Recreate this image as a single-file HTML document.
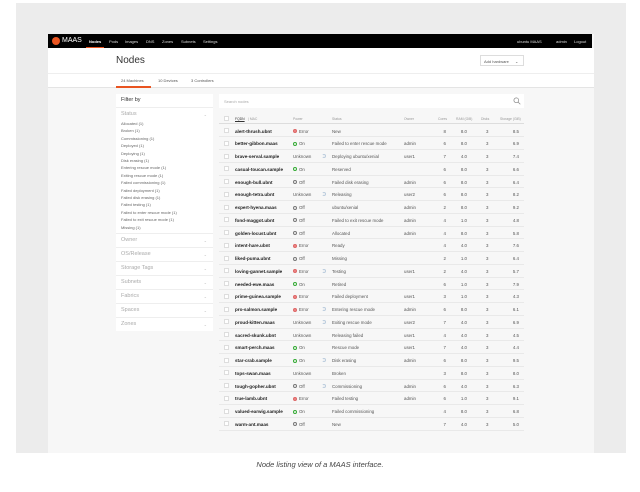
<!DOCTYPE html><html><head><meta charset="utf-8"><style>
*{margin:0;padding:0;box-sizing:border-box}
body{width:640px;height:492px;background:#fff;font-family:"Liberation Sans",sans-serif;position:relative;overflow:hidden;color:#333}
.a{position:absolute}
#panel{left:16px;top:3px;width:610px;height:450px;background:#ececec}
#frame{left:48px;top:34px;width:546px;height:419px;background:#f7f7f7}
#nav{left:48px;top:34px;width:544px;height:14px;background:#000;color:#ddd;font-size:4px}
#nav span{position:absolute;top:5px}
#hdr{left:48px;top:48px;width:546px;height:40px;background:#fff;border-bottom:1px solid #e4e4e4}
.t{font-size:4px;color:#555;white-space:nowrap}
#side{left:116px;top:94px;width:97px;height:237px;background:#fff}
#side .h{position:absolute;left:5px;font-size:5.5px;color:#aaa}
#side .i{position:absolute;left:5px;font-size:4px;color:#666;white-space:nowrap}
#side .ln{position:absolute;left:0;width:97px;height:1px;background:#eee}
#side .ch{position:absolute;right:6px;font-size:4px;color:#bbb}
.row{position:absolute;left:219px;width:305px;height:12.75px;border-bottom:1px solid #e9e9e9;font-size:4.4px;color:#555;white-space:nowrap}
.row span{position:absolute;top:4px}
.row .n{left:16px;font-weight:bold;color:#222;font-size:4.6px}
.row .cb{left:5px;top:3.5px;width:5px;height:5px;border:1px solid #ddd;background:#fff}
.r{text-align:right}
.dot{display:inline-block;width:4px;height:4px;border-radius:50%;vertical-align:-0.5px;margin-right:2px}
.err{background:#e88;border:1px solid #d66}
.on{border:1px solid #3a3}
.off{border:1px solid #777}
.spin{display:inline-block;width:4px;height:4px;border-radius:50%;border:1px solid #bcd;border-left-color:transparent}
</style></head><body>
<div class="a" id="panel"></div>
<div class="a" id="frame"></div>
<div class="a" id="nav">
<div class="a" style="left:4px;top:3px;width:8px;height:8px;border-radius:50%;background:#e95420"></div>
<span style="left:14px;top:3px;font-size:7px;color:#fff">MAAS</span>
<div class="a" style="left:38px;top:0;width:18px;height:14px;border-bottom:1px solid #e95420"></div>
<span style="left:41px;color:#fff;font-weight:bold">Nodes</span>
<span style="left:61px">Pods</span><span style="left:77px">Images</span><span style="left:98px">DNS</span><span style="left:114px">Zones</span><span style="left:133px">Subnets</span><span style="left:155px">Settings</span>
<span style="left:469px">ubuntu MAAS</span><span style="left:508px">admin</span><span style="left:526px">Logout</span>
</div>
<div class="a" id="hdr">
<div class="a" style="left:68px;top:7px;font-size:10px;color:#333">Nodes</div>
<div class="a" style="left:0;top:25px;width:546px;height:1px;background:#eee"></div>
<div class="a t" style="left:432px;top:7px;width:44px;height:11px;border:1px solid #ddd;padding:3px 0 0 3px">Add hardware <span style="margin-left:5px">⌄</span></div>
<div class="a t" style="left:73px;top:30px">24 Machines</div>
<div class="a t" style="left:110px;top:30px">10 Devices</div>
<div class="a t" style="left:143px;top:30px">3 Controllers</div>
<div class="a" style="left:68px;top:38px;width:35px;height:1.5px;background:#e95420"></div>
</div>
<div class="a" id="side">
<div class="h" style="top:3px;color:#333;font-size:5.5px">Filter by</div>
<div class="ln" style="top:13px"></div>
<div class="h" style="top:17px">Status</div><div class="ch" style="top:18px">⌄</div>
<div class="i" style="top:27px">Allocated (1)</div><div class="i" style="top:34.4px">Broken (1)</div><div class="i" style="top:41.8px">Commissioning (1)</div><div class="i" style="top:49.2px">Deployed (1)</div><div class="i" style="top:56.6px">Deploying (1)</div><div class="i" style="top:64px">Disk erasing (1)</div><div class="i" style="top:71.4px">Entering rescue mode (1)</div><div class="i" style="top:78.8px">Exiting rescue mode (1)</div><div class="i" style="top:86.2px">Failed commissioning (1)</div><div class="i" style="top:93.6px">Failed deployment (1)</div><div class="i" style="top:101px">Failed disk erasing (1)</div><div class="i" style="top:108.4px">Failed testing (1)</div><div class="i" style="top:115.8px">Failed to enter rescue mode (1)</div><div class="i" style="top:123.2px">Failed to exit rescue mode (1)</div><div class="i" style="top:130.6px">Missing (1)</div>
<div class="ln" style="top:139px"></div><div class="h" style="top:143px">Owner</div><div class="ch" style="top:144px">⌄</div>
<div class="ln" style="top:153px"></div><div class="h" style="top:157px">OS/Release</div><div class="ch" style="top:158px">⌄</div>
<div class="ln" style="top:167px"></div><div class="h" style="top:171px">Storage Tags</div><div class="ch" style="top:172px">⌄</div>
<div class="ln" style="top:181px"></div><div class="h" style="top:185px">Subnets</div><div class="ch" style="top:186px">⌄</div>
<div class="ln" style="top:195px"></div><div class="h" style="top:199px">Fabrics</div><div class="ch" style="top:200px">⌄</div>
<div class="ln" style="top:209px"></div><div class="h" style="top:213px">Spaces</div><div class="ch" style="top:214px">⌄</div>
<div class="ln" style="top:223px"></div><div class="h" style="top:227px">Zones</div><div class="ch" style="top:228px">⌄</div>
</div>
<div class="a" style="left:219px;top:94px;width:305px;height:14px;background:#fff"><span class="a t" style="left:5px;top:5px;color:#aaa">Search nodes</span>
<svg class="a" style="left:294px;top:3px" width="8" height="8" viewBox="0 0 8 8"><circle cx="3.3" cy="3.3" r="2.4" fill="none" stroke="#888" stroke-width=".7"/><path d="M5 5l2.3 2.3" stroke="#888" stroke-width=".7"/></svg></div>
<div class="row" style="top:113px;height:11px;font-size:3.4px;color:#999;border-bottom:1px solid #ddd"><span class="cb" style="top:3px"></span><span style="left:16px;top:4px;color:#333;text-decoration:underline">FQDN</span><span style="left:29px;top:4px">| MAC</span><span style="left:74px;top:4px">Power</span><span style="left:113px;top:4px">Status</span><span style="left:185px;top:4px">Owner</span><span style="left:219px;top:4px">Cores</span><span style="left:237px;top:4px">RAM (GiB)</span><span style="left:262px;top:4px">Disks</span><span style="left:281px;top:4px">Storage (GiB)</span></div>
<div id="rows"></div>
<div class="a" style="left:0;top:460px;width:640px;text-align:center;font-size:7.5px;font-style:italic;color:#444">Node listing view of a MAAS interface.</div>
<script>
var d=[["alert-thrush.ubnt","E","New","",8,"8.0","8.5"],["better-gibbon.maas","O","Failed to enter rescue mode","admin",6,"8.0","6.9"],["brave-serval.sample","U","*Deploying ubuntu/xenial","user1",7,"4.0","7.4"],["casual-toucan.sample","O","Reserved","",6,"8.0","6.6"],["enough-bull.ubnt","F","Failed disk erasing","admin",6,"8.0","6.4"],["enough-tetra.ubnt","U","*Releasing","user2",6,"8.0","8.2"],["expert-hyena.maas","F","ubuntu/xenial","admin",2,"8.0","9.2"],["fond-maggot.ubnt","F","Failed to exit rescue mode","admin",4,"1.0","4.8"],["golden-locust.ubnt","F","Allocated","admin",4,"8.0","5.8"],["intent-hare.ubnt","E","Ready","",4,"4.0","7.6"],["liked-puma.ubnt","F","Missing","",2,"1.0","6.4"],["loving-gannet.sample","E","*Testing","user1",2,"4.0","5.7"],["needed-ewe.maas","O","Retired","",6,"1.0","7.9"],["prime-guinea.sample","E","Failed deployment","user1",3,"1.0","4.3"],["pro-salmon.sample","E","*Entering rescue mode","admin",6,"8.0","6.1"],["proud-kitten.maas","U","*Exiting rescue mode","user2",7,"4.0","6.9"],["sacred-skunk.ubnt","U","Releasing failed","user1",4,"4.0","4.5"],["smart-perch.maas","O","Rescue mode","user1",7,"4.0","4.4"],["star-crab.sample","O","*Disk erasing","admin",6,"8.0","9.5"],["tops-swan.maas","U","Broken","",3,"8.0","8.0"],["tough-gopher.ubnt","F","*Commissioning","admin",6,"4.0","6.3"],["true-lamb.ubnt","E","Failed testing","admin",6,"1.0","9.1"],["valued-earwig.sample","O","Failed commissioning","",4,"8.0","6.8"],["warm-ant.maas","F","New","",7,"4.0","5.0"]];
var h="";d.forEach(function(r,i){var t=124.5+i*12.75;var p={E:'<i class="dot err"></i>Error',O:'<i class="dot on"></i>On',F:'<i class="dot off"></i>Off',U:'Unknown'}[r[1]];var s=r[2],sp="";if(s[0]=="*"){s=s.slice(1);sp='<span style="left:103px"><i class="spin"></i></span>';}
h+='<div class="row" style="top:'+t+'px"><span class="cb"></span><span class="n">'+r[0]+'</span><span style="left:74px">'+p+'</span>'+sp+'<span style="left:113px">'+s+'</span><span style="left:185px">'+r[3]+'</span><span class="r" style="left:215px;width:12px">'+r[4]+'</span><span class="r" style="left:236px;width:12px">'+r[5]+'</span><span style="left:267px">3</span><span class="r" style="left:288px;width:12px">'+r[6]+'</span></div>';});
document.getElementById("rows").innerHTML=h;
</script>
</body></html>
